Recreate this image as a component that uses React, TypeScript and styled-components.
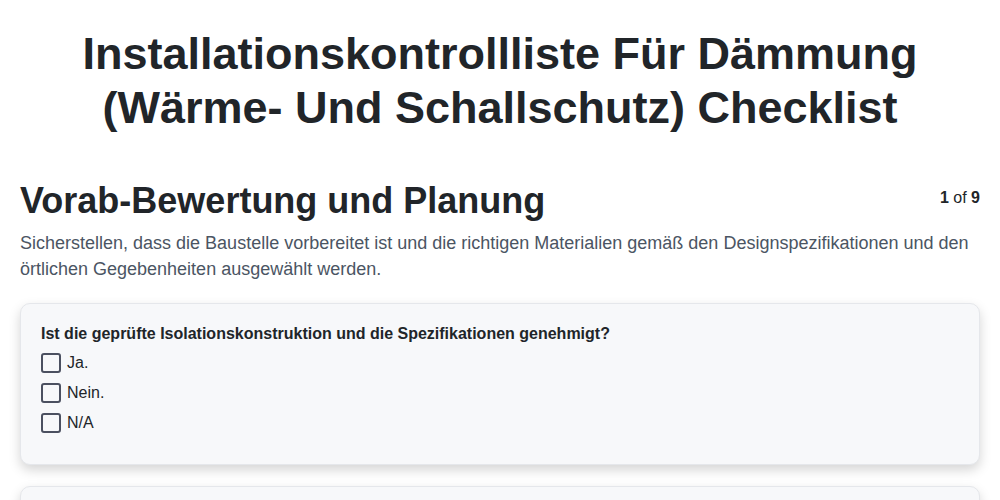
import React from "react";
import styled, { createGlobalStyle } from "styled-components";

const Global = createGlobalStyle`
  html, body { margin: 0; padding: 0; background: #ffffff; }
  body { font-family: "Liberation Sans", Arial, sans-serif; color: #212529; }
  * { box-sizing: border-box; }
`;

const Page = styled.div`
  padding: 0 20px;
`;

const Title = styled.h1`
  margin: 0;
  padding: 27px 40px 0;
  text-align: center;
  font-size: 45px;
  line-height: 54px;
  font-weight: 700;
  color: #212529;
`;

const Section = styled.section`
  margin-top: 44px;
`;

const SectionHeader = styled.div`
  display: flex;
  justify-content: space-between;
  align-items: flex-start;
`;

const SectionTitle = styled.h2`
  margin: 0;
  font-size: 36px;
  line-height: 43px;
  font-weight: 700;
  color: #212529;
`;

const Counter = styled.div`
  font-size: 16px;
  color: #212529;
  padding-top: 10px;
  b { font-weight: 700; }
`;

const Description = styled.p`
  margin: 8px 0 0;
  font-size: 18px;
  line-height: 26px;
  color: #4b5563;
`;

const Card = styled.div`
  margin-top: 21px;
  background: #f7f8fa;
  border: 1px solid #e5e7eb;
  border-radius: 10px;
  padding: 20px 20px 26px;
  box-shadow: 0 5px 12px rgba(0, 0, 0, 0.17);
`;

const Question = styled.div`
  font-size: 16px;
  font-weight: 700;
  line-height: 20px;
  color: #212529;
  margin-bottom: 4px;
`;

const Option = styled.label`
  display: flex;
  align-items: center;
  gap: 6px;
  height: 30px;
  font-size: 16px;
  color: #212529;
`;

const Box = styled.span`
  width: 20px;
  height: 20px;
  border: 2px solid #4b5060;
  border-radius: 3px;
  background: #f7f8fa;
  flex: none;
`;

const options = ["Ja.", "Nein.", "N/A"];

export default function App() {
  return (
    <>
      <Global />
      <Page>
        <Title>
          Installationskontrollliste Für Dämmung (Wärme- Und Schallschutz) Checklist
        </Title>
        <Section>
          <SectionHeader>
            <SectionTitle>Vorab-Bewertung und Planung</SectionTitle>
            <Counter>
              <b>1</b> of <b>9</b>
            </Counter>
          </SectionHeader>
          <Description>
            Sicherstellen, dass die Baustelle vorbereitet ist und die richtigen Materialien gemäß den
            Designspezifikationen und den örtlichen Gegebenheiten ausgewählt werden.
          </Description>
          <Card>
            <Question>Ist die geprüfte Isolationskonstruktion und die Spezifikationen genehmigt?</Question>
            {options.map((o) => (
              <Option key={o}>
                <Box />
                {o}
              </Option>
            ))}
          </Card>
          <Card>
            <Question>&nbsp;</Question>
          </Card>
        </Section>
      </Page>
    </>
  );
}
